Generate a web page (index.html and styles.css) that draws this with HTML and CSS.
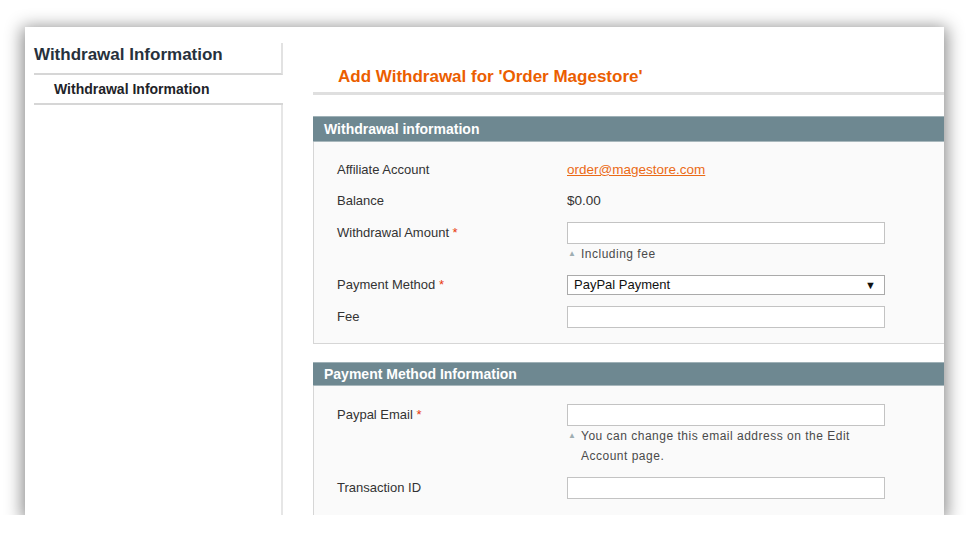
FILE: index.html
```html
<!DOCTYPE html>
<html>
<head>
<meta charset="utf-8">
<title>Add Withdrawal</title>
<link rel="stylesheet" href="styles.css">
</head>
<body>
<div class="shot">
  <aside class="side">
    <h3 class="side-title">Withdrawal Information</h3>
    <div class="tab">Withdrawal Information</div>
    <div class="side-fill"></div>
  </aside>
  <main class="main">
    <h2 class="page-title">Add Withdrawal for 'Order Magestore'</h2>
    <section class="box">
      <div class="box-head">Withdrawal information</div>
      <div class="box-body">
        <div class="row">
          <div class="label">Affiliate Account</div>
          <div class="value"><a class="link" href="#">order@magestore.com</a></div>
        </div>
        <div class="row">
          <div class="label">Balance</div>
          <div class="value">$0.00</div>
        </div>
        <div class="row field">
          <div class="label">Withdrawal Amount <span class="req">*</span></div>
          <div class="control">
            <div class="input"></div>
            <div class="note"><span class="tri">▲</span><span>Including fee</span></div>
          </div>
        </div>
        <div class="row">
          <div class="label">Payment Method <span class="req">*</span></div>
          <div class="control">
            <div class="select">PayPal Payment</div>
          </div>
        </div>
        <div class="row field">
          <div class="label">Fee</div>
          <div class="control"><div class="input"></div></div>
        </div>
      </div>
    </section>
    <section class="box">
      <div class="box-head box-head-sm">Payment Method Information</div>
      <div class="box-body box-body-open">
        <div class="row field">
          <div class="label">Paypal Email <span class="req">*</span></div>
          <div class="control">
            <div class="input"></div>
            <div class="note"><span class="tri">▲</span><span>You can change this email address on the Edit Account page.</span></div>
          </div>
        </div>
        <div class="row field">
          <div class="label">Transaction ID</div>
          <div class="control"><div class="input"></div></div>
        </div>
      </div>
    </section>
  </main>
</div>
</body>
</html>
```

FILE: styles.css
```css
* { box-sizing: border-box; }

body {
  margin: 0;
  background: #fff;
  font-family: "Liberation Sans", Arial, sans-serif;
  color: #333;
}

.shot {
  margin: 27px 0 0 25px;
  width: 919px;
  height: 488px;
  overflow: hidden;
  display: flex;
  background: #fff;
  box-shadow: 0 3px 16px 3px rgba(0, 0, 0, 0.45);
}

/* sidebar */
.side {
  width: 258px;
  flex: none;
  display: flex;
  flex-direction: column;
  padding-top: 16px;
}

.side-title {
  margin: 0 0 0 9px;
  height: 32px;
  padding-top: 1px;
  font-size: 17px;
  line-height: 22px;
  font-weight: bold;
  color: #27313c;
  border-right: 2px solid #e2e2e2;
  border-bottom: 2px solid #d6d6d6;
}

.tab {
  margin-left: 9px;
  height: 30px;
  padding: 4px 0 0 20px;
  font-size: 14px;
  line-height: 20px;
  font-weight: bold;
  color: #1e2328;
  border-bottom: 2px solid #d6d6d6;
}

.side-fill {
  flex: 1;
  border-right: 2px solid #e6e6e6;
}

/* main */
.main {
  flex: none;
  width: 690px;
  padding: 39px 0 0 30px;
}

.page-title {
  margin: 0;
  padding: 0 0 4px 25px;
  font-size: 17px;
  line-height: 22px;
  font-weight: bold;
  color: #eb5e00;
  border-bottom: 3px solid #dfdfdf;
}

.box { margin-top: 21px; }
.box + .box { margin-top: 18px; }

.box-head {
  height: 26px;
  padding-left: 11px;
  line-height: 24px;
  font-size: 14px;
  font-weight: bold;
  color: #fff;
  background: #6e8891;
  border-top: 1px solid #9fb1b7;
  border-bottom: 1px solid #a8b7bc;
}

.box-head-sm {
  height: 24px;
  line-height: 22px;
}

.box-body {
  background: #fafafa;
  border: 1px solid #d6d6d6;
  border-top: 0;
  padding: 18px 0 15px 23px;
  display: grid;
  row-gap: 11px;
}

.box-body-open { padding-bottom: 40px; }

.row {
  display: grid;
  grid-template-columns: 230px 318px;
  align-items: start;
}

.label {
  font-size: 13px;
  line-height: 20px;
  color: #333;
}

.row.field .label { line-height: 22px; }

.req { color: #e8380d; }

.value {
  font-size: 13.5px;
  line-height: 20px;
  color: #333;
}

.link {
  color: #eb6a16;
  text-decoration: underline;
}

.input {
  height: 22px;
  width: 318px;
  background: #fff;
  border: 1px solid #c3c3c3;
}

.select {
  position: relative;
  height: 20px;
  width: 318px;
  padding-left: 6px;
  background: #fff;
  border: 1px solid #aaa;
  font-size: 13px;
  line-height: 18px;
  color: #111;
}

.select::after {
  content: "▼";
  position: absolute;
  right: 8px;
  top: 0;
  font-size: 11px;
  line-height: 18px;
  color: #111;
}

.note {
  display: flex;
  font-size: 12px;
  line-height: 20px;
  letter-spacing: 0.5px;
  color: #4a4a4a;
}

.note .tri {
  flex: none;
  width: 14px;
  padding-left: 1px;
  font-size: 8px;
  letter-spacing: 0;
  color: #9eaeb2;
}
```
